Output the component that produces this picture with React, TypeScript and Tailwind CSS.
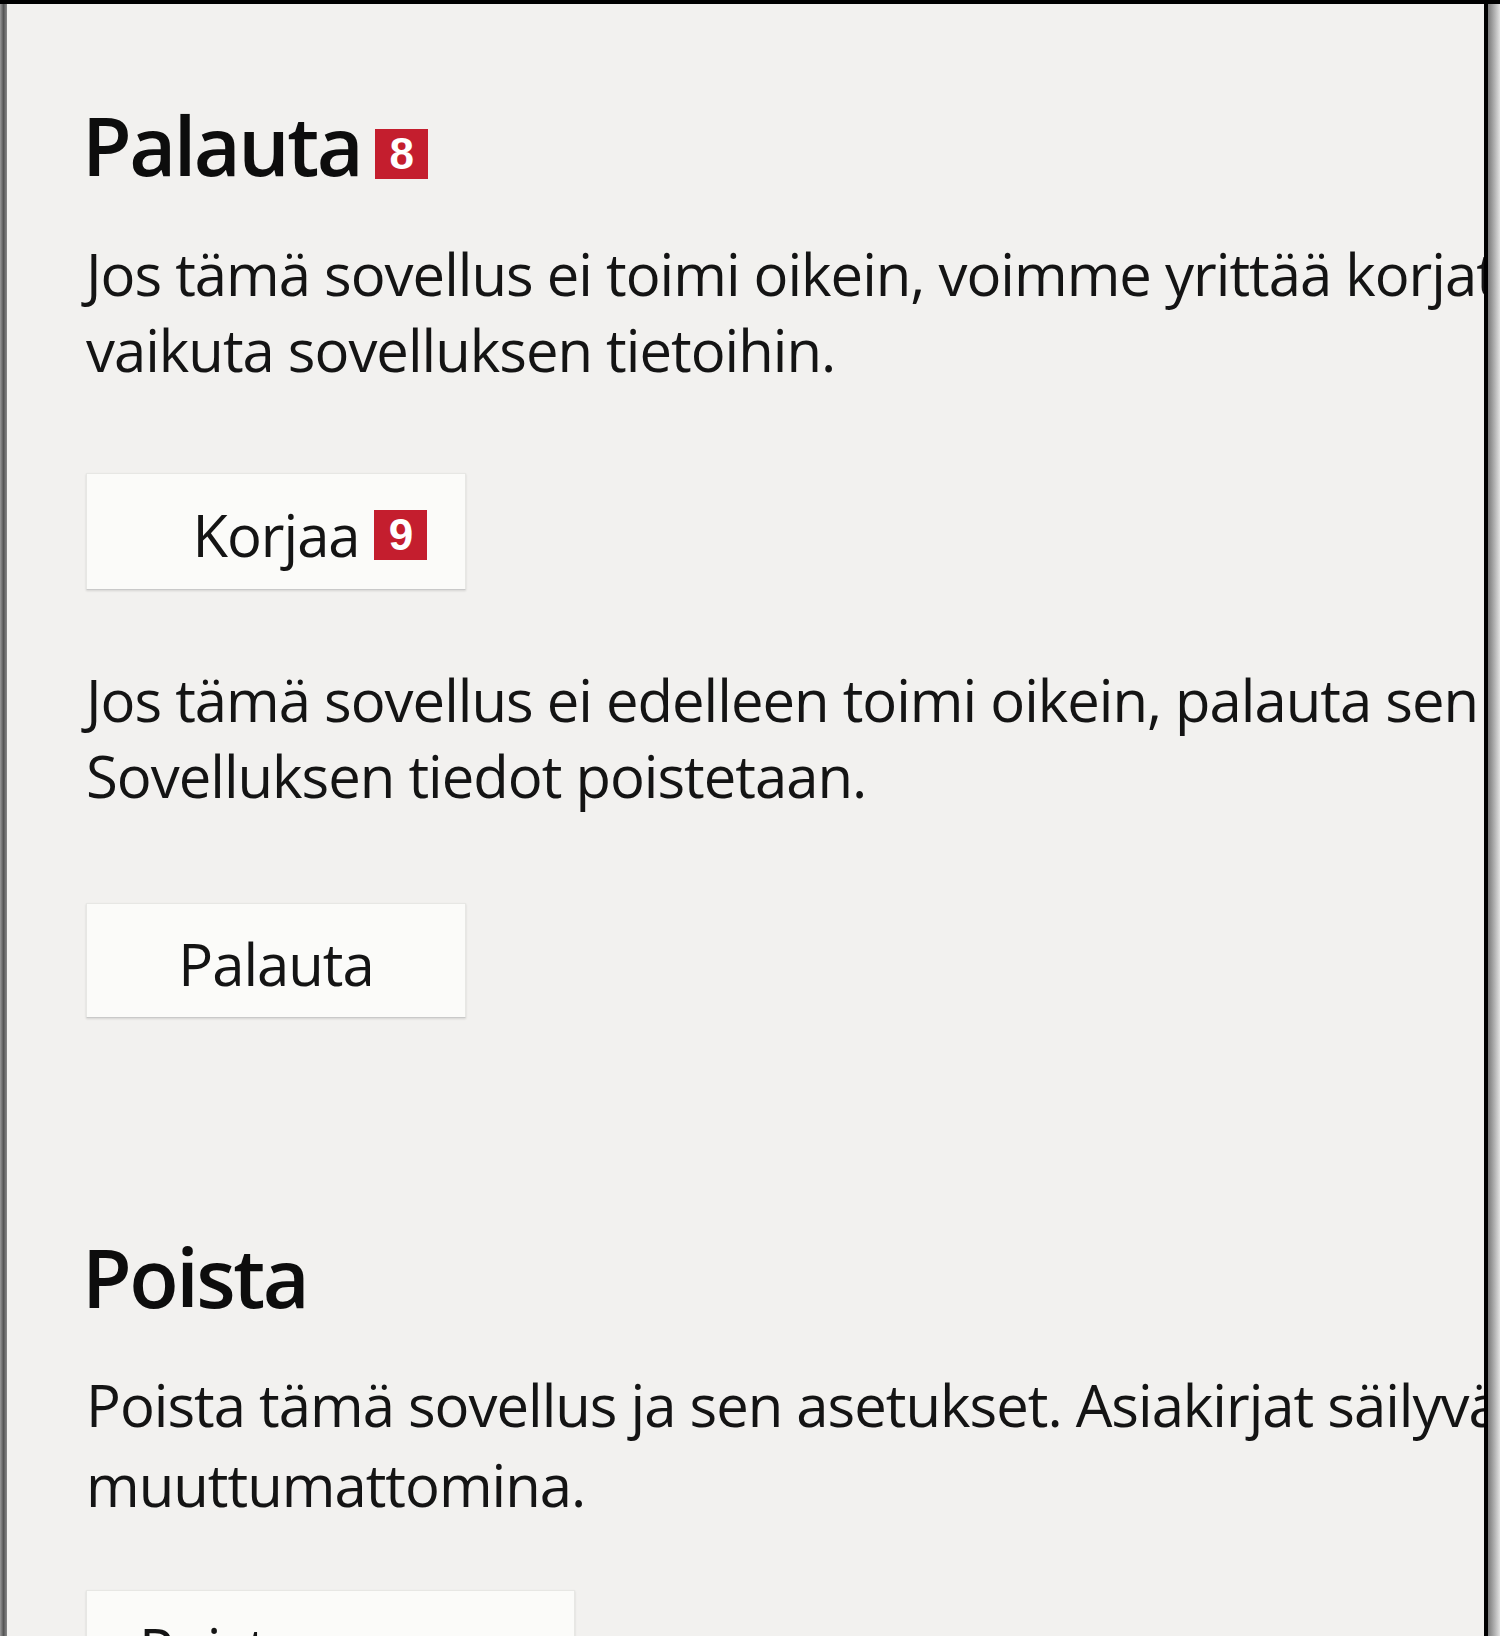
import type { ReactNode } from 'react'

function Badge({ n }: { n: number }) {
  return (
    <span className="inline-flex h-[50px] w-[53px] items-center justify-center bg-[#c41e2e] font-['Liberation_Sans',Arial,sans-serif] text-[44px] font-bold leading-none text-white">
      {n}
    </span>
  )
}

function Heading({ children }: { children: ReactNode }) {
  return (
    <h2 className="-ml-[4px] text-[81px] font-semibold leading-[100px] tracking-[-2.5px] text-[#0d0d0d]">
      {children}
    </h2>
  )
}

function Para({ children, tall }: { children: ReactNode; tall?: boolean }) {
  return (
    <p
      className={
        tall
          ? 'whitespace-nowrap text-[58px] leading-[80px] tracking-[-1px] text-[#141414]'
          : 'whitespace-nowrap text-[58px] leading-[76px] tracking-[-1px] text-[#141414]'
      }
    >
      {children}
    </p>
  )
}

export default function App() {
  return (
    <div className="flex h-[1636px] w-[1500px] flex-col overflow-hidden bg-[#dcdcdc] font-['Open_Sans',sans-serif]">
      <div className="h-[4px] shrink-0 bg-black" />
      <div className="flex min-h-0 flex-1">
        <div className="w-[7px] shrink-0 bg-gradient-to-r from-[#9a9a9a] via-[#555] to-[#8a8a8a]" />
        <main className="min-w-0 flex-1 overflow-hidden border-r-[4px] border-black bg-[#f2f1ef] pl-[79px] pt-[91px]">
          <div className="flex items-start">
            <Heading>Palauta</Heading>
            <span className="ml-[14px] mt-[34px]">
              <Badge n={8} />
            </span>
          </div>

          <div className="mt-[41px]">
            <Para>
              Jos tämä sovellus ei toimi oikein, voimme yrittää korjata sen. Tämä ei
              <br />
              vaikuta sovelluksen tietoihin.
            </Para>
          </div>

          <button className="relative mt-[85px] flex h-[117px] w-[380px] items-center justify-center border border-[#e7e7e4] border-b-[#c9c9c9] bg-[#fbfbf9] pt-[6px] text-[58px] leading-[76px] tracking-[-1px] text-[#141414] shadow-[0_1px_2px_rgba(0,0,0,0.12)]">
            Korjaa
            <span className="absolute left-[287px] top-[36px] flex">
              <Badge n={9} />
            </span>
          </button>

          <div className="mt-[72px]">
            <Para>
              Jos tämä sovellus ei edelleen toimi oikein, palauta sen alkutilaan.
              <br />
              Sovelluksen tiedot poistetaan.
            </Para>
          </div>

          <button className="mt-[89px] flex h-[115px] w-[380px] items-center justify-center border border-[#e7e7e4] border-b-[#c9c9c9] bg-[#fbfbf9] pt-[6px] text-[58px] leading-[76px] tracking-[-1px] text-[#141414] shadow-[0_1px_2px_rgba(0,0,0,0.12)]">
            Palauta
          </button>

          <div className="mt-[209px]">
            <Heading>Poista</Heading>
          </div>

          <div className="mt-[38px]">
            <Para tall>
              Poista tämä sovellus ja sen asetukset. Asiakirjat säilyvät
              <br />
              muuttumattomina.
            </Para>
          </div>

          <button className="mt-[65px] flex h-[117px] w-[489px] items-start border border-[#e7e7e4] border-b-[#c9c9c9] bg-[#fbfbf9] pl-[52px] pt-[20px] text-[58px] leading-[76px] tracking-[-1px] text-[#141414] shadow-[0_1px_2px_rgba(0,0,0,0.12)]">
            Poista
          </button>
        </main>
        <div className="w-[12px] shrink-0 bg-gradient-to-r from-[#7a7a7a] to-[#e2e2e2]" />
      </div>
    </div>
  )
}
